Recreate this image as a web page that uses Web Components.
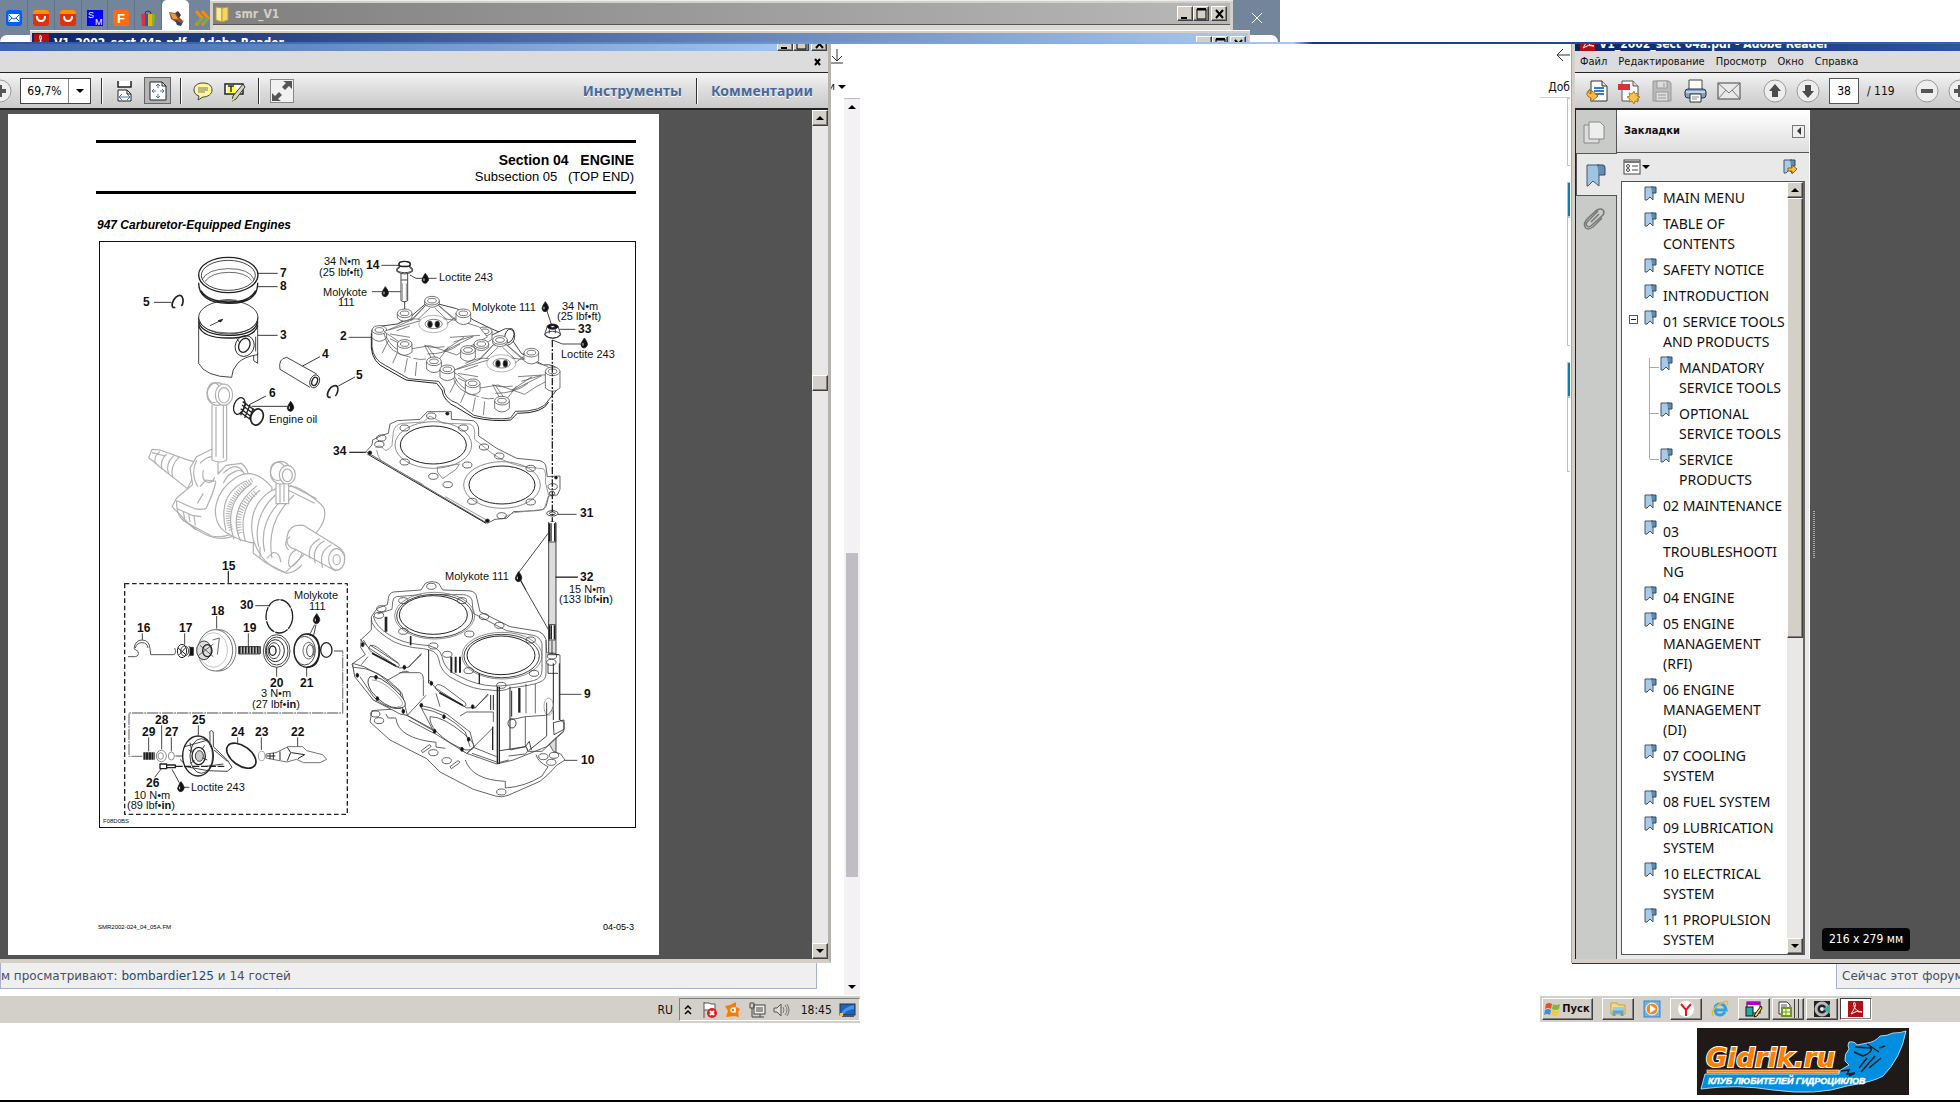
<!DOCTYPE html>
<html lang="ru">
<head>
<meta charset="utf-8">
<title>Gidrik.ru</title>
<style>
html,body{margin:0;background:#fff}
body{font:12px/16px "DejaVu Sans Condensed","DejaVu Sans",sans-serif;color:#111;overflow-x:hidden}
</style>
</head>
<body>
<desk-top></desk-top>
<script>
const base = `*{box-sizing:border-box}:host{display:block}button{font:inherit;color:inherit;border:0;padding:0;background:none}svg{display:block;overflow:visible;flex:none}`;
function define(name, css, html){
  customElements.define(name, class extends HTMLElement{
    constructor(){super();this.attachShadow({mode:'open'});}
    connectedCallback(){
      if(this.shadowRoot.firstChild)return;
      const t=document.createElement('template');
      t.innerHTML='<style>'+base+css+'</style>'+(typeof html==='function'?html(this):html);
      this.shadowRoot.append(t.content.cloneNode(true));
    }
  });
}

/* ---------- icons ---------- */
const flag = `<path d="M3 1h8v13l-3-3-3 3-2 0z" fill="#a9cbe6" stroke="#43576c"/><path d="M9 1h5v6h-4" fill="#5d8db5" stroke="#34485c"/>`;
const icons = {
 mail:[16,`<rect width="16" height="16" rx="3" fill="#005ff9"/><rect x="2.500" y="4" width="11" height="8" rx="1" fill="#fff"/><path d="M3 5l3 3-3 3M13 5l-3 3 3 3M6 8q2 2 4 0" stroke="#005ff9" fill="none"/>`],
 ali:[16,`<rect width="16" height="16" rx="3" fill="#e62e04"/><path d="M0 4V3q0-3 3-3h10q3 0 3 3v1z" fill="#ff9000"/><path d="M4 6q0 5 4 5t4-5" fill="none" stroke="#fff" stroke-width="2"/>`],
 sm:[16,`<rect width="16" height="16" fill="#00f"/><text x="1" y="8" font-family="Liberation Sans" font-size="9" fill="#fff">S</text><text x="8" y="15" font-family="Liberation Sans" font-size="9" fill="#fff">M</text>`],
 f:[16,`<rect width="16" height="16" rx="3" fill="#ff6a13"/><text x="4" y="13" font-family="Liberation Sans" font-weight="bold" font-size="13" fill="#fff">F</text>`],
 bag:[16,`<path d="M5 4q0-3 3-3t3 3" fill="none" stroke="#333"/><path d="M1 4h4v12H2z" fill="#e43137"/><path d="M5 4h3v12H5z" fill="#0064d2"/><path d="M8 4h4v12H8z" fill="#f5af02"/><path d="M12 4h3l-1 12h-2z" fill="#86b817"/>`],
 site:[16,`<path d="M1 2l6 1 8 8-3 4-9-6z" fill="#a1522a"/><path d="M2 3l5 1 3 5-5 0z" fill="#e79b3e"/><path d="M7 3l3-2 3 4-2 3z" fill="#473743"/><path d="M7 10l6 3 3-3-3 6-4-1z" fill="#39415a"/>`],
 chev:[16,`<path d="M2 1l6 7-6 7M8 1l6 7-6 7" fill="none" stroke="#ff8a00" stroke-width="3"/><path d="M8 8l-5 6M14 8l-5 6" stroke="#78a850" stroke-width="3"/>`],
 folder:[16,`<path d="M1 1l6 1v14l-6-2z" fill="#fbe893" stroke="#b99b3c"/><path d="M7 2l6-1v13l-6 2z" fill="#f3d566" stroke="#b99b3c"/>`],
 pdf:[16,`<rect x="0" y="0" width="15" height="16" fill="#b01117"/><path d="M3 13q6-9 4-11t-1 3 8 6q-6-2-11 2" fill="none" stroke="#fff"/>`],
 min:[11,`<rect x="1" y="9" width="6" height="2"/>`],
 max:[11,`<path d="M1 1h9v10H1zM1 2h9" fill="none" stroke="#000"/><path d="M1 1h9" stroke="#000" stroke-width="2"/>`],
 close:[11,`<path d="M2 2l7 8M9 2l-7 8" stroke="#000" stroke-width="2"/>`],
 closes:[8,`<path d="M1 1l5 6M6 1L1 7" stroke="#000" stroke-width="2"/>`],
 thin:[12,`<path d="M1 1l10 10M11 1L1 11" stroke="#fff"/>`],
 up:[8,`<path d="M0 6l4-4 4 4z"/>`], down:[8,`<path d="M0 2l4 4 4-4z"/>`], left:[8,`<path d="M6 0L2 4l4 4z" fill="#333"/>`],
 plus:[24,`<circle cx="12" cy="12" r="11" fill="#eee" stroke="#999"/><path d="M12 6v12M6 12h12" stroke="#555" stroke-width="4"/>`],
 minus:[24,`<circle cx="12" cy="12" r="11" fill="#eee" stroke="#999"/><path d="M6 12h12" stroke="#555" stroke-width="4"/>`],
 cup:[24,`<circle cx="12" cy="12" r="11" fill="#eee" stroke="#999"/><path d="M12 5l6 7h-3v6H9v-6H6z" fill="#4c4c4c"/>`],
 cdown:[24,`<circle cx="12" cy="12" r="11" fill="#eee" stroke="#999"/><path d="M12 19l6-7h-3V6H9v6H6z" fill="#4c4c4c"/>`],
 fitw:[20,`<path d="M3 0v6h13V0" fill="#fff" stroke="#222" stroke-width="1.500"/><path d="M3 20V9h9l4 4v7z" fill="#fff" stroke="#222"/><path d="M12 9v4h4" fill="none" stroke="#222"/><path d="M4 16h11M7 13l-3 3 3 3M12 13l3 3-3 3" fill="none" stroke="#4d72b0"/>`],
 fitp:[20,`<path d="M2 1h12l4 4v14H2z" fill="#fff" stroke="#222"/><path d="M14 1v4h4" fill="none" stroke="#222"/><path d="M10 3v4M8 5l2-2 2 2M10 17v-4M8 15l2 2 2-2M4 10h4M6 8l-2 2 2 2M16 10h-4M14 8l2 2-2 2" fill="none" stroke="#4d72b0"/>`],
 note:[20,`<path d="M10 2c6 0 9 3 9 7s-4 7-9 7l-5 3 1-4c-3-1-5-3-5-6 0-4 3-7 9-7z" fill="#fff799" stroke="#444"/><path d="M5 7h10M5 9h10M5 11h7" stroke="#777"/>`],
 hilite:[20,`<path d="M0 3h18v10H0z" fill="#fff" stroke="#222" stroke-width="1.500"/><rect x="2" y="4" width="8" height="8" fill="#ff4"/><path d="M3 5h6M6 5v6" stroke="#333" stroke-width="1.500"/><path d="M18 3l2 3-9 12-4 2 1-5z" fill="#d7d3bb" stroke="#333"/><path d="M6 17l4 2-4 1z" fill="#f6e93b"/>`],
 expand:[20,`<path d="M20 0v8l-3-3-4 4-3-3 4-4-3-2zM0 20v-8l3 3 4-4 3 3-4 4 3 2z" fill="#555"/>`],
 open:[22,`<path d="M6 1h11l5 5v15H6z" fill="#fff" stroke="#333"/><path d="M17 1v5h5" fill="#ddd" stroke="#333"/><path d="M9 8h10M9 11h10M9 14h10" stroke="#2f7cd0" stroke-width="2"/><path d="M5 9q-7 6 1 9v4l7-6-7-6v4q-4-1-1-5z" fill="#f5bd45" stroke="#a66b12"/>`],
 create:[22,`<path d="M4 1h11l5 5v15H4z" fill="#fff" stroke="#555"/><path d="M15 1v5h5" fill="#ddd" stroke="#555"/><rect y="4" width="12" height="6" fill="#d9303b"/><path d="M16 11l1 3 3-1-1 3 3 1-3 2 1 3-3-1-1 3-2-3-3 1 1-3-3-2 3-1-1-3 3 1z" fill="#f6c250" stroke="#b87d1d"/>`],
 save:[22,`<path d="M2 1h16l2 2v18H2z" fill="#bbb" stroke="#999"/><rect x="6" y="1" width="10" height="7" fill="#ddd" stroke="#999"/><rect x="5" y="12" width="12" height="9" fill="#ddd" stroke="#999"/><path d="M7 15h8M7 18h8M13 3v4" stroke="#999"/>`],
 print:[22,`<path d="M5 0h13v10H5z" fill="#fff" stroke="#444"/><rect x="1" y="9" width="21" height="9" rx="3" fill="#7ea3c4" stroke="#333"/><path d="M2 12h19" stroke="#bdd6ea" stroke-width="2"/><path d="M6 14h11v8H6z" fill="#fff" stroke="#333"/><path d="M8 17h7M8 19h5" stroke="#888"/>`],
 letter:[24,`<rect x="1" y="4" width="22" height="16" fill="#e9e9e9" stroke="#444"/><path d="M1 4l11 10L23 4M1 20l8-9M23 20l-8-9" fill="none" stroke="#777"/>`],
 pages:[22,`<path d="M1 4h10l5 4v14H1z" fill="#ddd" stroke="#888"/><path d="M6 1h11l4 4v13H6z" fill="#eee" stroke="#888"/>`],
 bigflag:[22,`<path d="M3 1h12v21l-6-5-5 5H3z" fill="#9fc4e2" stroke="#40576d"/><path d="M13 1h6q2 0 2 3v7h-6" fill="#5f8fb8" stroke="#34485c"/>`],
 clip:[22,`<path d="M15 4L5 14q-3 3-1 5t5-1L20 8q2-3 0-5t-6 0L5 11q-5 5-3 9t8 0l9-9M8 15l8-8" fill="none" stroke="#777" stroke-width="1.500"/>`],
 flag:[16,flag],
 opts:[16,`<rect x="0" y="1" width="16" height="14" fill="#fff" stroke="#444"/><path d="M0 3h16" stroke="#777" stroke-width="2"/><circle cx="4" cy="7" r="1.500" fill="none" stroke="#444"/><circle cx="4" cy="11" r="1.500" fill="none" stroke="#444"/><path d="M8 7h6M8 11h6" stroke="#444"/>`],
 newflag:[16,flag+`<path d="M7 9h4V6l5 4-5 5v-3H7z" fill="#f4bf4b" stroke="#93620f"/>`],
 win:[16,`<path d="M1 3q3-2 6 0l-1 5q-3-2-6 0z" fill="#e8502a"/><path d="M8 3q3 2 7 0l-1 5q-4 2-7 0z" fill="#7dbb36"/><path d="M0 9q3-2 6 0l-1 5q-3-2-6 0z" fill="#3b8fdc"/><path d="M7 9q3 2 7 0l-1 5q-4 2-7 0z" fill="#f9c933"/>`],
 explorer:[16,`<path d="M1 2h6l1 2h7v9H1z" fill="#f7dc83" stroke="#c9a13c"/><path d="M3 6h11v5H3z" fill="#8fd0ee"/><path d="M4 15v-4h8v4" fill="none" stroke="#5fa4cf" stroke-width="3"/>`],
 media:[16,`<rect width="16" height="16" fill="#6cb4ea" stroke="#3d83bf"/><circle cx="8" cy="8" r="6" fill="#f58a1f" stroke="#fff"/><path d="M6 4l6 4-6 4z" fill="#fff"/>`],
 yandex:[16,`<circle cx="8" cy="8" r="8" fill="#fff"/><path d="M3 3l5 6 5-6M8 8v7" fill="none" stroke="#e01a1a" stroke-width="2"/>`],
 ie:[16,`<path d="M13 11q-2 3-5 3-5 0-5-6 0-5 5-5t6 6H4" fill="none" stroke="#35a0e4" stroke-width="3"/><path d="M1 15Q-2 9 8 3t7 1" fill="none" stroke="#e7b93b" stroke-width="1.500"/>`],
 app1:[16,`<rect x="1" y="1" width="13" height="11" fill="#fff" stroke="#111"/><rect x="1" y="1" width="13" height="3" fill="#a0c"/><rect x="0" y="6" width="7" height="9" fill="#2aa" stroke="#111"/><path d="M15 5l-6 8-1 3 3-1 5-8z" fill="#fd3" stroke="#111"/>`],
 app2:[16,`<path d="M2 1h8l3 3v9H2z" fill="#fff" stroke="#333"/><path d="M4 4h6M4 6h6" stroke="#555"/><rect x="5" y="7" width="9" height="8" fill="#f6fbd8" stroke="#6d9a1c" stroke-width="2"/><path d="M9 8v7M5 11h9" stroke="#6d9a1c"/>`],
 app3:[16,`<rect width="16" height="16" fill="#222"/><circle cx="8" cy="8" r="6" fill="none" stroke="#bbb" stroke-width="3"/><circle cx="8" cy="8" r="2" fill="#eee"/><path d="M9 8l7-5v10z" fill="#4a9"/>`],
 tflag:[16,`<path d="M3 0v16M3 1h5l2 1h4v7h-5l-2-1H3" fill="#fff" stroke="#555"/><circle cx="11" cy="11" r="5" fill="#d22"/><path d="M9 9l4 4M13 9l-4 4" stroke="#fff" stroke-width="2"/>`],
 avast:[16,`<path d="M5 3l6-3v5l4 2-2 3 1 5-5-1-8 1 2-6-3-5z" fill="#ff7800"/><circle cx="8" cy="8" r="2" fill="none" stroke="#fff" stroke-width="1.500"/><path d="M10 5v6" stroke="#fff"/>`],
 net:[16,`<rect x="5" y="3" width="11" height="9" fill="#eee" stroke="#444"/><rect x="7" y="5" width="7" height="5" fill="#999"/><path d="M1 1h4v5H1zM3 6v9h4M7 15h8M11 12v3" fill="none" stroke="#444"/>`],
 snd:[16,`<path d="M1 6h3l4-4v12l-4-4H1z" fill="#ddd" stroke="#555"/><path d="M10 5q2 3 0 6M12 3q4 5 0 10M14 2q4 6 0 12" fill="none" stroke="#777"/>`],
 monitor:[16,`<rect x="0" y="2" width="15" height="11" fill="#1d63c0" stroke="#234"/><path d="M1 12q3-7 13-9v4q-8 1-10 5z" fill="#4a94e6"/><path d="M2 14h12" stroke="#555" stroke-width="2"/><rect y="11" width="3" height="3" fill="#fc0"/>`],
 dbl:[10,`<path d="M2 4l3-3 3 3M2 9l3-3 3 3" fill="none" stroke="#000" stroke-width="1.500"/>`],
 darr:[16,`<path d="M6 1v12M1 8l5 5 5-5M0 15h12" fill="none" stroke="#333"/>`],
 larr:[14,`<path d="M14 7H1M7 1L1 7l6 6" fill="none" stroke="#333"/>`]
};
define('ui-icon', `:host{display:inline-block;flex:none;line-height:0}`, el=>{
  const i=icons[el.getAttribute('name')];
  return `<svg width="${i[0]}" height="${i[0]}" aria-hidden="true">${i[1]}</svg>`;
});

/* ---------- classic raised button ---------- */
const raised = `background:#d4d0c8;border:1px solid;border-color:#fff #404040 #404040 #fff;box-shadow:inset -1px -1px #808080;`;
define('win-controls', `:host{display:flex;flex:none}
button{width:16px;height:15px;${raised}display:grid;place-items:center}.x{margin-left:2px}svg{margin:0}`,
 `<button aria-label="Свернуть"><ui-icon name="min"></ui-icon></button><button aria-label="Развернуть"><ui-icon name="max"></ui-icon></button><button class="x" aria-label="Закрыть"><ui-icon name="close"></ui-icon></button>`);

define('scroll-bar', `:host{display:flex;flex-direction:column;width:16px;flex:none;background:#e9e8e6}
button{height:16px;flex:none;${raised}display:grid;place-items:center}
.t{${raised}flex:0 0 var(--size);margin-top:var(--from)}i{flex:1}
:host([flat]){background:#f3f1f4}:host([flat]) button{background:none;border:0;box-shadow:none}:host([flat]) .t{background:#c1bdc4;border:0;box-shadow:none;margin-inline:2px}`,
 `<button aria-label="Вверх"><ui-icon name="up"></ui-icon></button><div class="t"></div><i></i><button aria-label="Вниз"><ui-icon name="down"></ui-icon></button>`);

/* ---------- top strip ---------- */
define('tab-strip', `
.a{display:flex;height:30px;width:1280px;background:#73859a}
nav{display:flex;width:210px;flex:none;padding-left:1px}
nav button{width:27px;height:30px;padding-top:5px;display:grid;place-items:center;border-right:1px solid #61728a}
nav .on{background:#fff;border-radius:5px 5px 0 0;border:0}
.smr{flex:1;background:#d4d0c8;border-top:1px solid #eee;padding:2px 3px 0}
.bar{height:21px;display:flex;align-items:center;gap:4px;padding:0 3px 0 2px;background:linear-gradient(90deg,#808080,#b8b8b8);color:#d4d0c8;font-weight:bold}
.bar span{flex:1}
.under{height:6px;border-top:1px solid #555;background:#dedbd3}
.x{width:47px;display:grid;place-items:center;padding-top:6px}
.b{display:flex;height:12px;width:1280px;background:#73859a}
.l{width:30px;background:#fff;border-radius:8px 0 0 0;margin-top:5px}
.w{flex:1;background:#d4d0c8;border-top:1px solid #fff;padding:2px 2px 0;overflow:hidden}
.t{height:9px;overflow:hidden;display:flex;align-items:flex-start;gap:4px;padding:0 2px;background:linear-gradient(90deg,#0a246a,#a6caf0);color:#fff;font-weight:bold;line-height:20px}
.t span{flex:1}.t win-controls{padding-top:3px}.t ui-icon{padding-top:1px}
.r{width:28px;background:#fff;border-radius:0 8px 0 0;margin:5px 2px 0 0}
.line{height:2px;background:linear-gradient(90deg,#2d53a0,#7ea6dc 50%,#a6caf0 66%,#16377d 67%,#3a62ae)}`,
`<div class="a"><nav aria-label="Вкладки">${['mail','ali','ali','sm','f','bag','site'].map((n,i)=>`<button class="${i==6?'on':''}" aria-label="Вкладка ${i+1}"><ui-icon name="${n}"></ui-icon></button>`).join('')}<ui-icon name="chev" style="padding:10px 0 0 5px"></ui-icon></nav>
<div class="smr"><div class="bar"><ui-icon name="folder"></ui-icon><span>smr_V1</span><win-controls></win-controls></div><div class="under"></div></div>
<button class="x" aria-label="Закрыть"><ui-icon name="thin"></ui-icon></button></div>
<div class="b"><div class="l"></div><div class="w"><div class="t"><ui-icon name="pdf"></ui-icon><span>V1_2002_sect 04a.pdf - Adobe Reader</span><win-controls></win-controls></div></div><div class="r"></div></div><div class="line"></div>`);

/* ---------- reader toolbars ---------- */
const bar = `:host{display:flex;align-items:center;height:38px;border-top:1px solid #222;border-bottom:2px solid #222;background:linear-gradient(#f4f4f4,#dcdcdc 50%,#c9cbc9);overflow:hidden}
i{width:1px;height:26px;background:#333;box-shadow:1px 0 #fff}`;
define('left-tools', bar+`
ui-icon{display:block}.z{display:flex;height:26px;width:71px;margin:0 10px 0 8px;border:1px solid #444;background:#fff}
.z input{width:48px;border:0;border-right:1px solid #888;text-align:center;font:12px "DejaVu Sans Condensed",sans-serif;padding:0;background:none}
.z button{flex:1;display:grid;place-items:center}
.p{margin-left:-12px}.w{margin:0 9px 0 13px}.on{width:27px;height:27px;background:#b5b5b5;border:1px solid #666;display:grid;place-items:center;margin-right:9px}
.n{margin:0 12px 0 12px}.h{margin-right:13px}.e{width:24px;height:24px;border:1px solid #888;background:#f1f1f1;display:grid;place-items:center;margin-left:11px}
.s{flex:1}.tx{font:bold 14px/20px "Noto Sans",sans-serif;color:#48699a;text-shadow:0 1px #fff}.i{margin-right:14px}.k{margin:0 15px 0 14px}`,
`<button class="p" aria-label="Увеличить"><ui-icon name="plus"></ui-icon></button><div class="z"><input aria-label="Масштаб" value="69,7%"><button aria-label="Выбрать масштаб"><ui-icon name="down"></ui-icon></button></div><i></i>
<button class="w" aria-label="По ширине"><ui-icon name="fitw"></ui-icon></button><button class="on" aria-label="Страница целиком"><ui-icon name="fitp"></ui-icon></button><i></i>
<button class="n" aria-label="Заметка"><ui-icon name="note"></ui-icon></button><button class="h" aria-label="Выделение"><ui-icon name="hilite"></ui-icon></button><i></i><button class="e" aria-label="Полный экран"><ui-icon name="expand"></ui-icon></button>
<span class="s"></span><button class="tx i">Инструменты</button><i></i><button class="tx k">Комментарии</button>`);
define('right-tools', bar+`
:host{padding-left:10px}.g{display:flex;gap:11px;margin-right:11px;align-items:center}.v{display:flex;gap:9px;margin:0 9px 0 11px}
input{width:30px;height:26px;border:1px solid #555;background:#fff;text-align:center;font:12px "DejaVu Sans Condensed",sans-serif;padding:0}span{margin:0 10px 0 8px;white-space:pre}ui-icon{display:block}`,
`<div class="g">${['open','create','save','print','letter'].map(n=>`<button aria-label="${n}"><ui-icon name="${n}"></ui-icon></button>`).join('')}</div><i></i><div class="v"><button aria-label="Предыдущая"><ui-icon name="cup"></ui-icon></button><button aria-label="Следующая"><ui-icon name="cdown"></ui-icon></button></div><input aria-label="Страница" value="38"><span>/ 119</span><i></i><div class="v" style="margin-left:10px"><button aria-label="Уменьшить"><ui-icon name="minus"></ui-icon></button><button aria-label="Увеличить"><ui-icon name="plus"></ui-icon></button></div>`);

/* ---------- engine figure ---------- */
const labels = [
['7',280,277,1],['8',280,290,1],['5',143,306,1],['3',280,339,1],['4',322,358,1],['5',356,379,1],['6',269,397,1],['Engine oil',269,423],['34',333,455,1],['15',222,570,1],
['34 N•m',324,265],['(25 lbf•ft)',319,276],['14',366,269,1],['Loctite 243',439,281],['Molykote',323,296],['111',338,306],['2',340,340,1],['Molykote 111',472,311],['34 N•m',562,310],['(25 lbf•ft)',557,320],['33',578,333,1],['Loctite 243',561,358],['31',580,517,1],['Molykote 111',445,580],['32',580,581,1],
['15 N•m',569,593],['(133 lbf•<tspan font-weight="bold">in</tspan>)',559,603],['9',584,698,1],['10',581,764,1],
['30',240,609,1],['18',211,615,1],['17',179,632,1],['16',137,632,1],['19',243,632,1],['Molykote',294,599],['111',309,610],['20',270,687,1],['21',300,687,1],['3 N•m',261,697],['(27 lbf•<tspan font-weight="bold">in</tspan>)',252,708],['28',155,724,1],['25',192,724,1],['29',142,736,1],['27',165,736,1],['24',231,736,1],['23',255,736,1],['22',291,736,1],['26',146,787,1],['Loctite 243',191,791],['10 N•m',134,799],['(89 lbf•<tspan font-weight="bold">in</tspan>)',127,809]];
const drop=(x,y)=>`<path d="M${x} ${y-15}q11 14 9 21q-3 9-10 9t-9-9q0-7 10-21z" fill="#111"/><path d="M${x-4} ${y}v8" stroke="#fff"/>`;
const ell=(x,y,a,b,e='')=>`<ellipse cx="${x}" cy="${y}" rx="${a}" ry="${b}" ${e}/>`;
const boss=(x,y,h=24)=>`<g stroke="#444" stroke-width="2.200"><path d="M${x-22} ${y}v${h}q22 20 44 0v-${h}" fill="#fff"/>${ell(x,y,22,13,'fill="#fff"')}${ell(x,y,13,7)}</g>`;
const hole=(x,y)=>ell(x,y,14,9,'stroke="#444"');
const vlines=(xs,a,b,w=3)=>`<path d="${xs.map(x=>`M${x} ${a}V${b}`).join('')}" stroke-width="${w}"/>`;
const head=(dx,dy)=>`<g transform="translate(${dx} ${dy})" stroke="#555" stroke-width="2.200"><path d="M222 305l86-36 38-42h40l42 38 80 26 24 30-62 34-30 20-80-28-60 10-60-40z" fill="#fff"/><path d="M222 310q8 60 80 72M236 300l95-28M240 312l60 10M300 356l-60-30M344 346l22 42M352 348l28 40M416 350l-30 40M460 274l-60-8M490 320l-90 45M352 372q60 0 98-30M262 282q40-20 70-14M236 330l-20 40M262 368l-14 32M292 385l-8 42M320 396l-4 42M420 322l90-6M402 362l60-40M228 320q20 40 60 50M310 385q24 6 38 2M344 346q20 10 60 4M430 336l60-18M410 282l26-20M300 288l-40 14"/>${ell(370,282,44,26,'stroke="#999"')}${ell(371,282,26,14)}${ell(360,283,7,10,'fill="#111"')}${ell(382,283,7,10,'fill="#111"')}${boss(366,212,10)}<path d="M346 226l-44 46M386 226l50 42M360 234l-36 34M374 234l36 34"/>${boss(284,342)}${boss(372,394)}${boss(460,250)}</g>`;
const figure = `
<g transform="translate(90 230) scale(.33333)" stroke-width="2.500">
 ${ell(415,135,89,53,'stroke-width="4"')}${ell(415,136,81,45)}<path d="M336 150q15-33 79-34t78 34M345 154q20-26 70-27t70 24" stroke-width="2"/><path d="M326 158q0 60 89 62t88-62M333 182q20 32 82 34t82-34" stroke-width="4"/><path d="M390 211q25-5 50 0"/>
 <path d="M503 130h60M503 170h60M503 316h60M192 217h52M638 408l52-28M745 468l50-27M478 524l50-26M485 529h108M778 667h50M415 1022v36" stroke="#111"/>
 <path d="M256 232c-12 4-12-10-5-22s20-18 25-10 4 22-2 28" stroke-width="5"/><path d="M722 502c-12 2-12-10-5-22s20-16 25-10 0 22-6 28" stroke-width="5"/>
 ${ell(415,262,89,50)}<path d="M326 262v138q20 40 99 42 0-22 18-42t60-26V262M491 378v14l12 8v-30"/>
 <path d="M326 275q10 40 89 41t88-41M326 286q10 38 89 38t88-38" stroke-width="4"/><path d="M326 268q10 40 89 41t88-41" stroke-width="2"/>
 <path d="M360 287l38-18M384 272l14-4-6 8z" fill="#111"/>${ell(464,348,28,32,'transform="rotate(25 464 348)"')}${ell(463,346,16,22,'transform="rotate(25 463 346)" stroke-width="4"')}<path d="M440 325l10 14M497 320v44"/>
 <path d="M590 382l90 50M570 418l90 54M590 382q-26 4-20 36"/>${ell(674,454,14,20,'transform="rotate(20 674 454)"')}${ell(674,454,8,13,'transform="rotate(20 674 454)" stroke-width="4"')}
 ${ell(448,528,16,26,'transform="rotate(20 448 528)" stroke-width="4"')}<path d="M458 515l36 26M456 525l34 26M452 536l34 26M450 546l30 22M468 518l-16 38M480 524l-16 40M490 534l-12 34" stroke-width="4"/>${ell(501,561,18,25,'transform="rotate(20 501 561)" fill="#fff" stroke-width="5"')}
 ${drop(602,529)}
 <g stroke="#b0b0b0" stroke-width="3.500" fill="#fff">
  <path d="M186 658L176 684L196 698L206 708L292 776L330 700L288 688L210 660z"/><path d="M210 665q-20 10-14 38M230 672q-22 20-14 46M252 676q-28 26-16 56M268 680q-30 30-20 64M186 668l40 10" fill="none"/>
  <path d="M320 680l44-22 20 14v60l24-26 46-6q26 20 22 56l-50 164q-60 20-130-40l-50-50 14-26 48-40-8-50z"/>
  <path d="M260 812l44 20q20 10 44 4M348 836q20-40 30-80M320 690q-20 44 4 80M330 770l18-20 30 4M340 790l-18 30M262 836l44 20 28 4M268 860l50 40M340 720q-6 30 10 36t24-14M400 730q40-40 62 0M260 812q-2 40 20 60l84 46q30 6 56-4M280 846l4 20M296 852l4 24M312 856l4 30M330 700q20-20 36-20M400 760q10-26 36-36t30 20" fill="none"/>
  <path d="M366 525v165q24 12 44 0V515M378 530v150M400 525v160" />
  ${ell(382,492,31,34)}${ell(372,488,20,30,'fill="none"')}${ell(402,494,26,32)}${ell(402,496,17,23)}
  <path d="M376 840q6-60 60-96t110 28l-20 170q-60 0-110-30-40-20-40-72z"/>
  <path d="M470 752q-90 40-62 150M486 760q-90 60-54 168M500 768q-90 70-48 166M510 780q-70 60-44 154" fill="none"/>
  <path d="M424 900q-36-80 62-150" fill="none" stroke-width="14" stroke-dasharray="3 4"/><path d="M450 910q-20-70 50-125" fill="none" stroke-width="16" stroke-dasharray="3 5"/>
  <path d="M490 930q-20-90 42-140 60-40 110-6t60 50q10 34-20 70l-40 70-56 54q-70-20-96-98z"/>
  <path d="M506 950q-20-90 50-155M524 965q-20-90 56-160M546 985q-20-110 66-190M574 770l100 50M600 766l80 40M490 936v34l40 30 60 30q30-4 46-26M510 950v34M530 985l20-18q20 0 22 30M618 960q-20 8-22 34t18 10q20-20 24-40" fill="none"/>
  <path d="M558 755v66h38v-66z"/><path d="M570 760v60M582 760v55"/>${ell(572,728,31,34)}${ell(563,724,22,28,'fill="none"')}${ell(592,734,24,28)}${ell(592,736,15,19)}
  <path d="M592 916Q600 880 640 886L744 950Q768 966 764 990Q758 1022 736 1022L616 958Q584 950 592 916z"/><path d="M600 920q-24 20-4 40M690 926q-40 20-30 60M704 932q-40 20-28 68M724 944q-40 20-26 70" fill="none"/>${ell(740,988,24,32)}${ell(740,989,11,15)}
 </g>
</g>
<g transform="translate(310 230) scale(.33333)" stroke-width="2.500">
 <path d="M214 106h56M300 135l18 10h62M186 185h86M116 322h70M748 298h48M727 330l30 12h66M118 667h48M744 853h56M737 1042h66M710 240l15 46M716 908l-90 120M630 1046l18 34"/>
 ${drop(346,145)}${drop(226,185)}${drop(706,230)}${drop(823,339)}${drop(626,1040)}
 <path d="M273 130v82q10 8 20 0v-82M274 150h18M284 214v36" fill="#fff"/><path d="M277 160v50M289 160v50" stroke="#888"/><path d="M266 100q16-12 34 0v14q8 2 8 10-24 16-48 0 0-8 8-10z" fill="#fff"/>${ell(284,102,17,8,'stroke-width="4"')}${ell(284,118,24,10)}
 <path d="M186 300V350Q190 390 226 406L296 446Q336 450 386 454L402 476Q402 506 442 520L492 556Q552 572 602 564L616 544Q700 546 716 510L748 470V424Q734 400 700 405L634 370L600 320L544 296L490 270L440 236L385 222L346 222L300 262L262 282L200 290z" fill="#fff"/>
 <path d="M184 310V354Q188 398 228 416L288 450Q338 456 380 460L396 480Q400 514 440 532L490 562Q550 576 602 570L622 550Q700 550 716 516" stroke-width="3"/>
 <path d="M540 318l46-22q26-2 28 20t-22 30l-30 8" fill="#fff"/>${ell(598,317,13,22,'transform="rotate(20 598 317)"')}
 ${boss(208,300)}${boss(284,250,14)}${boss(524,304)}${head(0,0)}${boss(474,360)}${boss(514,342,10)}${head(204,118)}${boss(412,418)}${boss(728,424,50)}
 <path d="M727 330v550" stroke-width="4" stroke-dasharray="22 5 6 5"/>
 <path d="M712 288h32l8 26q-24 22-48 0z" fill="#fff"/>${ell(728,290,16,8,'fill="#111"')}${ell(728,290,6,3,'fill="#fff"')}${ell(728,314,23,10)}<path d="M718 298v12M736 298v12"/>
 <path d="M168 665L186 645L188 630L215 616L235 610L240 582L262 572L330 568L352 545H424V568L490 572Q506 580 506 600V618L560 655L620 685L690 692Q708 698 708 712L712 740L750 738V778L742 795L716 798L708 830Q700 842 680 842L610 845L590 865L555 868L532 880z" stroke="#444"/>
 <path d="M172 672L528 880" stroke-width="3"/><path d="M196 652q16-10 24 4t26-10l4-40q4-24 30-26l60-4 20-18 40 22 80 2q14 6 14 26v20l52 42q50 36 110 42l44 4q10 10 6 40l10 40q-10 30-14 42l-90 10-30 14M200 660q4 30 30 44l110 60M406 800l120 68" stroke="#888"/>
 ${ell(370,645,115,70,'stroke="#777"')}${ell(370,645,99,57,'stroke-width="3"')}${ell(576,765,115,70,'stroke="#777"')}${ell(576,765,99,57,'stroke-width="3"')}
 ${[[284,594],[460,594],[284,696],[472,705],[522,651],[568,678],[662,715],[662,816],[487,814],[413,764],[370,739],[364,558],[208,643],[214,624],[575,857],[728,770]].map(p=>hole(...p)).join('')}<path d="M382 712l66-10-10 16-40 28-16-20z" stroke="#777"/>${ell(180,668,5,5,'fill="#111"')}${ell(412,551,5,4,'fill="#111"')}${ell(738,743,4,4,'fill="#111"')}${ell(532,872,6,5,'fill="#111"')}${ell(726,790,8,6)}
 ${ell(727,850,17,8)}${ell(727,850,9,4)}
 <path d="M716 880v690q10 10 22 0V880q-11-10-22 0z" fill="#ddd"/><path d="M716 876v60h21v-60" fill="#fff"/><path d="M718 880v54M723 880v54M734 880v54" stroke-width="4"/>
</g>
<g transform="translate(90 560) scale(.33333)" stroke-width="2.500">
 <path d="M415 36v34M496 137h44M380 168v38M284 220v34M157 220v20M475 220v40M560 322v28M650 322v28M674 194l-16 32M678 194l-8 36M325 496v30M215 496v72M176 532v42M244 532v42M443 532v18M514 532v38M623 532v28M194 652l20-26M246 628l24 44M282 682h16"/>
 <rect x="104" y="71" width="668" height="692" stroke-width="4" stroke-dasharray="14 8"/>
 <path d="M732 273h26v186H117v130h40" stroke="#888" stroke-width="4" stroke-dasharray="34 3 5 3"/>
 <path d="M114 290h22q12-2 8-16l-12-8q4-26 24-26 22 0 24 26l2 18h70q8-4 2-20M136 264q4-16 20-16t18 16" stroke="#555" stroke-width="3"/>
 ${ell(276,273,14,20,'stroke-width="3"')}${ell(284,273,12,15)}<path d="M264 264l24 20M268 284l20-22M296 258q14 12 0 32" stroke-width="3"/><path d="M300 262h10v24h-10z" fill="#111"/>
 ${ell(386,271,52,62,'stroke="#555"')}${ell(376,271,52,62,'fill="#fff" stroke="#555"')}${ell(370,270,42,52,'stroke="#bbb"')}${ell(342,271,22,28,'fill="#ddd"')}${ell(352,272,14,18,'stroke-width="4"')}<path d="M330 256l40 34M368 240l20-6-6 50M326 286l44-34" stroke-width="2"/>
 <path d="M446 270h66" stroke-width="22" stroke-dasharray="6 3"/><path d="M446 260h64v22h-64z"/>
 ${ell(568,169,40,50,'stroke-width="4" stroke-dasharray="40 3"')}
 ${ell(560,273,40,49)}${ell(560,273,34,42)}${ell(556,272,27,33,'stroke-width="3"')}${ell(552,272,18,24)}${ell(548,272,10,14,'stroke-width="4"')}
 ${ell(650,272,38,50,'stroke-width="4"')}<path d="M650 222q38 2 38 50t-38 50" stroke-width="5"/>${ell(644,272,32,43)}${ell(656,272,17,25,'stroke-width="2"')}${ell(660,272,10,18)}${ell(709,270,17,22,'stroke-width="4"')}
 ${drop(680,176)}${drop(273,680)}
 <path d="M160 588h34" stroke-width="22" stroke-dasharray="7 1"/>${ell(214,588,15,17,'stroke="#777"')}${ell(212,588,8,10,'stroke="#777"')}${ell(244,588,9,12,'stroke="#777"')}<path d="M256 588h40"/>
 <path d="M360 545V524Q356 512 364 512T370 524V560L412 600L426 622L412 634L350 632z" fill="#fff"/>${ell(324,588,46,60,'fill="#fff" stroke-width="4"')}${ell(334,588,34,52)}${ell(326,588,20,26,'stroke-width="4"')}${ell(328,588,12,16,'fill="#ccc"')}<path d="M284 560l70-20M288 620l66 12M372 570l40 34M270 598l10 10M300 548l8 34M340 620l60-8M296 570l12 8M344 556l-8 12M352 600l-14-6M300 610l14-8"/><path d="M258 619h150" stroke-width="4" stroke-dasharray="20 5"/>
 <path d="M210 612h20v14h-20zM230 615h26v8h-26z" stroke-width="4" fill="#fff"/>
 <ellipse cx="454" cy="587" rx="50" ry="29" transform="rotate(36 454 587)" stroke-width="5"/>${ell(515,588,10,14,'stroke="#999"')}
 <path d="M528 582L558 578L586 564L594 560H638L650 572L698 584L710 598L690 608H640L620 598L590 606L558 600L528 594z" fill="#fff" stroke="#555"/><path d="M530 588h26M540 580v18M550 578v20M570 574v26M592 562l10 16-10 24M604 578l40 6-20 12" stroke-width="3"/>
</g>
<g transform="translate(340 560) scale(.33333)" stroke-width="2.500">
 <path d="M96 452L90 486L150 540L260 596L300 636L400 688L466 708Q486 714 504 706L600 664L626 642L650 616L675 600L662 582L640 574L628 552L300 440L120 450z" fill="#fff" stroke="#444"/>
 <path d="M168 475q6 60 120 72v14l28 4M376 600q20 60 120 64v20q60-4 110-36l18-28q-30-14-36-36M244 572l24-18q10 4 0 10l-20 14zM330 620l24-18q10 4 0 10l-20 14zM138 462l6 12h24" stroke="#444"/>${hole(117,482)}${hole(106,462)}${hole(280,578)}${hole(320,602)}${hole(610,590)}${hole(634,607)}${hole(642,586)}${hole(484,696)}
 <path d="M94 210L64 238L62 262L76 284L36 312L45 345L100 420L200 466L280 512L380 580L470 612L520 600L620 560L640 540L672 512V488L660 480V285L620 278L618 238Q612 220 596 214L510 200L420 155L408 104Q402 92 380 92L308 90L296 70Q276 60 256 70L243 90L160 96Q146 100 145 116L142 134L112 145L94 170z" fill="#fff" stroke="#444"/>
 <path d="M94 175Q92 200 140 232Q180 262 250 266Q290 270 296 296Q300 340 350 362Q400 390 450 390Q490 396 510 384Q580 376 600 366Q618 360 618 340V240M100 168Q106 200 150 226Q190 250 240 254Q300 256 306 290Q312 330 360 350Q410 376 460 378Q500 380 580 362Q606 356 606 330V250Q600 230 580 226L500 212L400 160L396 120Q390 106 370 104L300 104M244 104L170 110Q158 112 158 126L156 148L112 162" stroke="#555"/>
 ${ell(284,167,120,70,'stroke="#777"')}${ell(280,165,102,58,'stroke-width="3"')}${ell(284,168,114,65)}${ell(486,287,120,70,'stroke="#777"')}${ell(483,286,102,58,'stroke-width="3"')}${ell(485,288,113,65)}
 ${[[274,79],[124,146],[117,166],[190,122],[190,214],[388,222],[366,122],[432,170],[478,196],[572,240],[280,258],[322,283],[484,376],[386,332],[582,340],[636,288],[634,307]].map(p=>hole(...p)).join('')}
 ${vlines([136,140],170,215,4)}${vlines([212],228,256,5)}${vlines([266],270,370)}${vlines([334,347,360],290,338,6)}${vlines([418],340,372,4)}${vlines([515],392,470,3)}${vlines([538],384,458,7)}${vlines([558,586],372,460,2)}${vlines([472,478],380,612,4)}${vlines([510],380,570)}${vlines([452,460],405,450,3)}${vlines([458],500,570,4)}${vlines([640,658],310,480)}
 <path d="M38 310L72 320L120 346L186 400L202 466L180 462L100 420L44 350z" fill="#fff" stroke="#444"/><path d="M42 322q70 0 138 70l10 70M60 350l40 60q40 40 84 36M70 240l14 22 94 62 26-2 40-38M80 256l-20-18M206 322l38-42M206 334l-16 0-50 28M90 255l84 55M178 338h60q12 2 12 20v50M202 466l56-60M84 290l-20 24" stroke="#444"/>
 <path d="M92 256q-14 10 6 22l70 42q14 4 8-10l-64-48q-14-8-20-6z" stroke-width="2"/><path d="M96 280l72 38" stroke-width="5"/>
 <path d="M90 350q30-6 80 44t4 50q-40 0-80-50-18-30-4-44z" fill="#fff"/><path d="M96 360q30 0 70 40t6 40" stroke="#999"/>
 <path d="M240 436L274 444L320 462L390 516L402 560L380 580L284 520z" fill="#fff" stroke="#444"/><path d="M268 360l18 24 94 60 26-2 40-38M246 446q70 10 130 70l14 44M270 470q40 0 100 50t8 50q-50-16-90-56-20-24-18-44zM404 446l40-44M360 468l20-12h80v30M384 578l76-76M300 440l-12-40M202 466l80 44M206 480l76 40" stroke="#444"/><path d="M292 374q-14 10 6 22l70 42q14 4 8-10l-64-48q-14-8-20-6z" stroke-width="2"/><path d="M298 398l70 38" stroke-width="5"/>
 ${[[68,254],[193,322],[274,370],[398,440],[52,346],[108,352],[112,416],[190,454],[244,436],[312,470],[284,514],[386,538],[366,568]].map(p=>ell(p[0],p[1],4,6,'fill="#111"')).join('')}
 <path d="M510 480l46-10 60-4q20-6 22-26M556 470v84l8 20h42l66-60M512 570l44-10q14 10 0 22l-50 6M396 580l80 28 30-8M400 562l70 28" stroke="#444"/>${ell(516,490,12,14)}${ell(626,440,14,26,'stroke="#999"')}<path d="M480 572l76-12 12-16 6 26M640 488l32-8v28l-30 16zM566 572l54-44v-100"/>
 <path d="M646 51h68M658 403h66M674 601h38M540 60l86 150"/>
 <path d="M626 194h20v46h-20z" fill="#fff"/><path d="M629 196v42M634 196v42M643 196v42" stroke-width="4"/><path d="M636 242v40M624 284h32M624 310v30h30"/>
</g>
${labels.map(([t,x,y,b])=>`<text x="${x}" y="${y}" ${b?'font-weight="bold" font-size="12"':''}>${t}</text>`).join('')}
<text x="103" y="823" font-size="6">F08D0BS</text>`;
define('engine-figure', `:host{border:1px solid #111;width:537px}svg{width:100%;height:auto}
text{font-family:"Liberation Sans",sans-serif;fill:#111;stroke:none}`,
`<svg viewBox="100 242 535 585" font-size="11" fill="none" stroke="#222" stroke-linejoin="round" role="img" aria-label="947 Carburetor-Equipped Engines">${figure}</svg>`);

define('pdf-page', `:host{width:651px;height:841px;background:#fff;padding:26px 23px 0 88px;font:13px/16px "Liberation Sans",sans-serif;display:flex;flex-direction:column;color:#000}
header{border:solid #000;border-width:3px 0;height:54px;text-align:right;padding:9px 2px 0 0}b,header span{white-space:pre}b{font-size:14px}
h2{font:italic bold 12px/16px "Liberation Sans",sans-serif;margin:23px 0 8px 1px}
engine-figure{margin-left:3px}
footer{margin-top:auto;padding:0 2px 20px;display:flex;justify-content:space-between;align-items:center;font-size:9px}small{font-size:6px}`,
`<header><b>Section 04   ENGINE</b><br><span>Subsection 05   (TOP END)</span></header><h2>947 Carburetor-Equipped Engines</h2><engine-figure></engine-figure><footer><small>SMR2002-024_04_05A.FM</small><span>04-05-3</span></footer>`);

/* ---------- windows ---------- */
define('left-window', `:host{width:831px;height:919px;display:flex;flex-direction:column;border:solid #d4d0c8;border-width:0 3px 4px 0;box-shadow:inset -1px 0 #222;border-right-color:#b6b3ac;outline:0}
.t{height:7px;background:linear-gradient(90deg,#3d62ac,#a6caf0);overflow:hidden;display:flex;align-items:flex-end;justify-content:flex-end;padding-right:1px}
.m{height:21px;background:#dcdcdc;display:flex;justify-content:flex-end;align-items:center;padding-right:6px}
.c{flex:1;display:flex;background:#535353;min-height:0}
.p{flex:1;padding:4px 0 0 8px}scroll-bar{--from:249px;--size:16px}`,
`<div class="t"><win-controls></win-controls></div><div class="m"><button aria-label="Закрыть документ"><ui-icon name="closes"></ui-icon></button></div><left-tools></left-tools><div class="c"><div class="p"><pdf-page></pdf-page></div><scroll-bar></scroll-bar></div>`);

const marks=[['MAIN MENU'],['TABLE OF<br>CONTENTS'],['SAFETY NOTICE'],['INTRODUCTION'],['01 SERVICE TOOLS<br>AND PRODUCTS',[['MANDATORY<br>SERVICE TOOLS'],['OPTIONAL<br>SERVICE TOOLS'],['SERVICE<br>PRODUCTS']]],['02 MAINTENANCE'],['03<br>TROUBLESHOOTI<br>NG'],['04 ENGINE'],['05 ENGINE<br>MANAGEMENT<br>(RFI)'],['06 ENGINE<br>MANAGEMENT<br>(DI)'],['07 COOLING<br>SYSTEM'],['08 FUEL SYSTEM'],['09 LUBRICATION<br>SYSTEM'],['10 ELECTRICAL<br>SYSTEM'],['11 PROPULSION<br>SYSTEM'],['']];
const item=([t,k])=>`<li>${k?'<button class="tog" aria-label="Свернуть раздел"></button>':''}<a href="#"><ui-icon name="flag"></ui-icon><span>${t}</span></a>${k?`<ul>${k.map(item).join('')}</ul>`:''}</li>`;
define('bookmark-tree', `:host{display:flex;border:1px solid #555;border-right:2px solid #666;background:#fff;overflow:hidden;font:14px/20px "Noto Sans",sans-serif;flex:1;min-height:0}
ul{list-style:none;margin:0;padding:0}.root{flex:1;padding:6px 0 0 20px;overflow:hidden}li{position:relative}
a{display:flex;gap:5px;padding-bottom:6px;color:#111;text-decoration:none;white-space:nowrap}ui-icon{margin-top:-2px}
span{flex:1}li li{padding-left:16px}li ul{background:linear-gradient(#aaa,#aaa) 7px 0/1px 101px no-repeat}
li li::before{content:"";position:absolute;left:8px;top:9px;width:9px;border-top:1px solid #aaa}
.tog{position:absolute;left:-13px;top:3px;width:9px;height:9px;border:1px solid #555;background:linear-gradient(#222,#222) center/5px 1px no-repeat #fff}
scroll-bar{--from:0px;--size:440px}`,
`<ul class="root">${marks.map(item).join('')}</ul><scroll-bar></scroll-bar>`);

define('right-window', `:host{height:919px;flex:1;min-width:0;display:flex;flex-direction:column;border:solid #d4d0c8;border-width:0 0 4px 3px;box-shadow:-1px 0 #aaa, 0 1px #333;overflow:hidden}
.t{height:7px;flex:none;background:linear-gradient(90deg,#0a246a,#2f55a0);color:#fff;font-weight:bold;font-size:12px;line-height:14px;overflow:hidden;display:flex;gap:3px;align-items:flex-end;padding-left:5px}
nav{height:21px;background:#dcdcdc;display:flex;align-items:center;gap:11px;padding-left:5px;font-size:11px}
.c{flex:1;display:flex;min-height:0;background:#535353;border-left:1px solid #222}
.side{width:41px;background:#c9cbc9;display:flex;flex-direction:column;border-right:1px solid #555}
.side button{width:100%;height:43px;display:grid;place-items:center;padding-right:4px}.side .on{background:#e9e9e9;border:1px solid #555;border-right:0;width:calc(100% + 1px);margin-right:-1px}
.pan{width:193px;background:#e9e9e9;display:flex;flex-direction:column;border-right:1px solid #fff}
.h{height:43px;display:flex;align-items:center;justify-content:space-between;background:linear-gradient(#fff,#dedede);padding:0 4px 0 7px;border-bottom:1px solid #555;font-weight:bold;font-size:11px}
.h button{width:13px;height:13px;border:1px solid #777;display:grid;place-items:center;background:#eee}
.o{height:28px;display:flex;align-items:center;padding:0 12px 0 7px;gap:2px}.o i{flex:1}
bookmark-tree{margin:0 4px 4px}.d{flex:1;display:flex;align-items:flex-end;padding:0 0 8px 12px;position:relative}
.d b{background:#050505;color:#fff;font-weight:normal;font-size:12px;border-radius:4px;width:88px;height:23px;line-height:23px;text-align:center}
.d i{position:absolute;left:3px;top:401px;width:2px;height:47px;border-inline:1px dotted #aaa}`,
`<div class="t"><ui-icon name="pdf"></ui-icon><span>V1_2002_sect 04a.pdf - Adobe Reader</span></div><nav>${['Файл','Редактирование','Просмотр','Окно','Справка'].map(x=>`<button>${x}</button>`).join('')}</nav><right-tools></right-tools>
<div class="c"><div class="side"><button aria-label="Страницы"><ui-icon name="pages"></ui-icon></button><button class="on" aria-label="Закладки"><ui-icon name="bigflag"></ui-icon></button><button aria-label="Вложения"><ui-icon name="clip"></ui-icon></button></div>
<div class="pan"><div class="h">Закладки<button aria-label="Скрыть"><ui-icon name="left"></ui-icon></button></div><div class="o"><ui-icon name="opts"></ui-icon><ui-icon name="down"></ui-icon><i></i><ui-icon name="newflag"></ui-icon></div><bookmark-tree></bookmark-tree></div><div class="d"><i></i><b>216 x 279 мм</b></div></div>`);

/* ---------- forum page edges ---------- */
define('left-edge', `:host{width:29px;height:951px;display:flex;flex-direction:column;align-items:flex-start}
.d{padding:4px 0 0 0;height:32px}.m{height:22px;display:flex;gap:3px;font-size:11px;align-items:center}.m span{width:4px;overflow:hidden;direction:rtl}
scroll-bar{flex:1;align-self:flex-end;border-top:1px solid #bbb;--from:438px;--size:324px}`,
`<div class="d"><ui-icon name="darr"></ui-icon></div><div class="m"><span>и</span><ui-icon name="down"></ui-icon></div><scroll-bar flat></scroll-bar>`);
define('right-edge', `:host{width:32px;height:919px;display:flex;flex-direction:column;align-items:flex-end;padding-right:2px}
.a{height:32px;padding-top:4px}.b{height:22px;font-size:12px;line-height:22px;border-bottom:1px solid #ccd;width:100%;text-align:right}
i{width:3px;border:1px solid #b5c3d8;border-right:0}i.k{background:#1279b5}`,
`<div class="a"><ui-icon name="larr"></ui-icon></div><div class="b">Доб</div><i style="height:68px"></i><u style="height:16px"></u><i class="k" style="height:35px"></i><i style="height:129px"></i><u style="height:16px"></u><i class="k" style="height:35px"></i><i style="height:75px"></i>`);

define('status-line', `:host{display:flex;align-items:center;height:26px;background:#efefef;border:1px solid #a5b3d0;border-top:0;color:#475063;font:12px/24px "DejaVu Sans",sans-serif;white-space:nowrap;overflow:hidden}`, `<slot></slot>`);

define('task-tray', `:host{display:flex;height:28px;align-items:center;justify-content:flex-end;background:#d2d0c9;border-top:1px solid #fff}
.box{display:flex;align-items:center;height:23px;width:181px;margin-left:6px;border:1px solid;border-color:#808080 #fff #fff #808080;padding:0 3px;justify-content:space-between}`,
`<span>RU</span><div class="box"><ui-icon name="dbl"></ui-icon><ui-icon name="tflag"></ui-icon><ui-icon name="avast"></ui-icon><ui-icon name="net"></ui-icon><ui-icon name="snd"></ui-icon><time>&nbsp;18:45</time><ui-icon name="monitor"></ui-icon></div>`);
define('task-buttons', `:host{display:flex;height:27px;align-items:center;background:#d2d0c9;border-top:1px solid #fff;padding-left:2px;gap:2px}
button{width:32px;height:22px;${raised}display:flex;align-items:center;justify-content:center}.s{width:51px;font-weight:bold;gap:1px;margin-right:7px;font-size:11px}
.f{background:none;border:0;box-shadow:none}.on{background:#fff;border-color:#404040 #fff #fff #404040}.g{box-shadow:inset -1px -1px #808080,inset -4px 0 #d4d0c8,inset -5px 0 #404040,inset -8px 0 #d4d0c8,inset -9px 0 #404040;padding-right:6px}`,
`<button class="s"><ui-icon name="win"></ui-icon>Пуск</button>${[['explorer',''],['media','f'],['yandex',''],['ie','f'],['app1',''],['app2','g'],['app3',''],['pdf','on']].map(([n,c])=>`<button class="${c}" aria-label="${n}"><ui-icon name="${n}"></ui-icon></button>`).join('')}`);

define('club-logo', `:host{width:212px;height:67px;background:#1f1a17}`,
`<svg width="212" height="67" viewBox="0 0 212 67" role="img" aria-label="Gidrik.ru">
<path d="M8 46L4 61Q40 56 76 62Q120 68 150 58Q176 54 186 48Q204 30 209 3Q204 5 196 5Q190 8 183 8Q178 14 170 15L160 17Q158 13 152 14Q150 17 152 21Q147 26 148 33L152 37L142 43V46z" fill="#008fe0" stroke="#d9eefb" stroke-width=".8"/>
<path d="M158 19L174 20Q176 24 166 28L157 24M170 16L182 24M144 43L152 42L150 46L158 45L152 48M170 30L162 40M178 28L164 44M184 30L172 40M182 20l6-2" fill="none" stroke="#1f1a17" stroke-width="1.500"/>
<text x="9" y="39" font-family="DejaVu Sans" font-size="26" font-weight="bold" font-style="italic" fill="#ff7f00" stroke="#fff" stroke-width="2" paint-order="stroke">Gidrik.ru</text>
<rect x="10" y="42" width="132" height="3" fill="#ff7f00" stroke="#fff" stroke-width=".6"/>
<text x="11" y="56" font-family="Liberation Sans Narrow,Liberation Sans" font-size="9" font-weight="bold" font-style="italic" fill="#fff" stroke="#fff" stroke-width=".4">КЛУБ ЛЮБИТЕЛЕЙ ГИДРОЦИКЛОВ</text></svg>`);

define('desk-top', `:host{display:flex;flex-direction:column;min-height:100vh;background:#fff}
main,.tasks{display:flex;justify-content:space-between}
.l{width:860px;display:flex;flex-wrap:wrap}.lw{width:831px}.r{width:420px}.rr{display:flex}
.l status-line{width:817px}.r status-line{margin-left:296px;border-right:0;padding-left:5px}
.tasks task-tray{width:860px}.tasks task-buttons{width:420px}
footer{display:flex;justify-content:flex-end;padding:5px 51px 5px 0;border-bottom:2px solid #000;margin-top:auto}`,
`<tab-strip></tab-strip><main><div class="l"><div class="lw"><left-window></left-window><status-line><span>м просматривают: <a href="#" style="color:#1b4a72;text-decoration:none">bombardier125</a> и 14 гостей</span></status-line></div><left-edge></left-edge></div>
<div class="r"><div class="rr"><right-edge></right-edge><right-window></right-window></div><status-line>Сейчас этот форум</status-line></div></main>
<div class="tasks"><task-tray></task-tray><task-buttons></task-buttons></div><footer><club-logo></club-logo></footer>`);
</script>
</body>
</html>
